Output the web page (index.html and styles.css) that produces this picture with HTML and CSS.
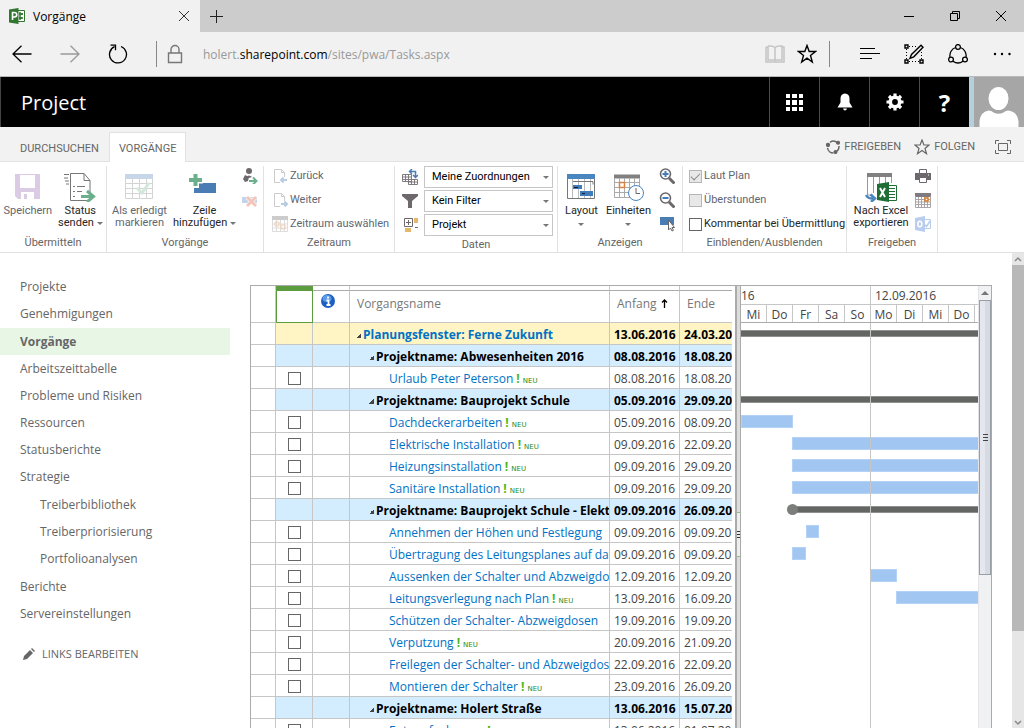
FILE: index.html
```html
<!DOCTYPE html>
<html lang="de">

<head>
    <meta charset="utf-8">
    <meta name="viewport" content="width=device-width, initial-scale=1.0">
    <title>Vorgänge</title>
    <link rel="stylesheet" href="styles.css">
</head>

<body>
    <div class="tab-strip">
        <div class="tab">
            <svg width="16" height="16" viewBox="0 0 16 16"><path fill="#fff" stroke="#31752f" d="M8 2.500h7.500v11H8z"/><path d="M11 4v8M10 6h4M10 10h4M13 5v2M12 9v2" stroke="#31752f" stroke-width="1.500"/><path fill="#31752f" d="M0 1.500 9.500 0v16L0 14.500z"/><path d="M3.500 12V4.500h2a2 2 0 0 1 0 4.500h-2" fill="none" stroke="#fff" stroke-width="1.600"/></svg>
            <span class="tab-title">Vorgänge</span>
            <button class="plain" aria-label="Tab schließen"><svg width="10" height="10"><path d="M0 0l10 10M10 0L0 10" stroke="#333"/></svg></button>
        </div>
        <button class="plain new-tab" aria-label="Neuer Tab"><svg width="13" height="13"><path d="M6.500 0v13M0 6.500h13" stroke="#222"/></svg></button>
        <div class="window-buttons">
            <button class="plain" aria-label="Minimieren"><svg width="10" height="10"><path d="M0 5.500h10" stroke="#000"/></svg></button>
            <button class="plain" aria-label="Wiederherstellen"><svg width="10" height="10"><path d="M.5 2.500h7v7h-7zM2.500 2.500v-2h7v7h-2" fill="none" stroke="#000"/></svg></button>
            <button class="plain" aria-label="Schließen"><svg width="10" height="10"><path d="M0 0l10 10M10 0L0 10" stroke="#000"/></svg></button>
        </div>
    </div>

    <div class="address-bar">
        <div class="nav-buttons">
            <button class="plain" aria-label="Zurück"><svg width="20" height="18" fill="none" stroke="#000" stroke-width="1.300"><path d="M19.500 9H1M9.500.8 1 9l8.500 8.200"/></svg></button>
            <button class="plain" aria-label="Vorwärts"><svg width="20" height="18" fill="none" stroke="#999" stroke-width="1.300"><path d="M.5 9H19M10.500.8 19 9l-8.500 8.200"/></svg></button>
            <button class="plain" aria-label="Aktualisieren"><svg width="20" height="20" fill="none" stroke="#000" stroke-width="1.300"><path d="M13 2.500A8.500 8.500 0 1 1 6.500 2.700M2.500 1.200h5v5"/></svg></button>
        </div>
        <div class="url">
            <svg width="16" height="20" fill="none" stroke="#777" stroke-width="1.400"><path d="M1.500 9h13v9.500h-13zM4 9V5.500a4 4 0 0 1 8 0V9"/></svg>
            <span>holert.<b>sharepoint.com</b>/sites/pwa/Tasks.aspx</span>
        </div>
        <div class="url-tools">
            <svg width="20" height="20" fill="none" stroke="#c4c4c4" stroke-width="1.500"><path d="M1 3h2v13h7V3.500Q8 1.500 3 2M10 3.500Q12 1.500 17 2v14h-7M17 3h2v15H1V3M10 16v2"/></svg>
            <svg width="20" height="20" fill="none" stroke="#000" stroke-width="1.400"><path d="M10 1.500l2.200 6h6.300l-5 4 1.800 6.500-5.300-3.800L4.700 18l1.800-6.500-5-4h6.300z"/></svg>
        </div>
        <div class="browser-tools">
            <svg width="20" height="20" stroke="#000"><path d="M0 4.500h15M0 9.500h20M0 14.500h12"/></svg>
            <svg width="20" height="20" fill="none" stroke="#000"><path stroke-width="1.400" d="M1 1h3v3H1zM1 16h3v3H1zM16 16h3v3h-3z"/><path stroke-dasharray="1 2" d="M5 2.500h7M2.500 5v10M5 17.500h10M17.500 8v7"/><path stroke-width="1.400" d="M17 1.200 7.500 10.500l-1.500 3.800 3.800-1.500L19 3.300z"/></svg>
            <svg width="20" height="20" fill="none" stroke="#000" stroke-width="1.300"><circle cx="10" cy="3" r="2.400"/><circle cx="3" cy="15.500" r="2.400"/><circle cx="17" cy="15.500" r="2.400"/><path d="M7.600 3.500A8.500 8.500 0 0 0 2 13M12.400 3.500A8.500 8.500 0 0 1 18 13M5 17.200a8.500 8.500 0 0 0 10 0"/></svg>
            <svg width="20" height="20"><circle cx="3" cy="10" r="1.200"/><circle cx="10" cy="10" r="1.200"/><circle cx="17.500" cy="10" r="1.200"/></svg>
        </div>
    </div>

    <header class="suite-bar">
        <h1>Project</h1>
        <button class="suite-button" aria-label="Apps"><svg width="17" height="17" fill="#fff"><path d="M0 0h4v4H0zM6 0h5v4H6zM13 0h4v4h-4zM0 6h4v5H0zM6 6h5v5H6zM13 6h4v5h-4zM0 13h4v4H0zM6 13h5v4H6zM13 13h4v4h-4z"/></svg></button>
        <button class="suite-button" aria-label="Benachrichtigungen"><svg width="16" height="18" fill="#fff"><path d="M8 .5c3 0 4.500 2.200 4.500 5v4l3 5H.5l3-5v-4c0-2.800 1.500-5 4.500-5zM6 15.500h4q-.5 2-2 2t-2-2z"/></svg></button>
        <button class="suite-button" aria-label="Einstellungen"><svg width="18" height="18" fill="none" stroke="#fff"><circle cx="9" cy="9" r="4.700" stroke-width="3.600"/><path stroke-width="3.200" d="M9 .5v3M9 14.500v3M.5 9h3M14.500 9h3M3 3l2 2M13 13l2 2M3 15l2-2M13 5l2-2"/></svg></button>
        <button class="suite-button help" aria-label="Hilfe">?</button>
        <div class="avatar"><svg width="50" height="50"><path fill="#a6a6a6" d="M0 0h50v50H0z"/><ellipse cx="24.500" cy="21.500" rx="10" ry="11.500" fill="#fff"/><path fill="#fff" d="M5.500 50V44q1-9 9-10.500 3 0 5 2 5 2.500 10 0 2-2 5-2 9 1.500 10 10.500v6z"/></svg></div>
    </header>

    <div class="ribbon-tabs">
        <a href="#" class="ribbon-tab">DURCHSUCHEN</a>
        <a href="#" class="ribbon-tab active">VORGÄNGE</a>
        <div class="page-actions">
            <a href="#"><svg width="14" height="14" fill="none" stroke="#666" stroke-width="1.500"><path d="M4 2.300A5.800 5.800 0 0 1 11.500 3M13 6a6 6 0 0 1-2.500 5.500M7.500 13A6 6 0 0 1 1.500 8"/><circle cx="2" cy="5" r="1.400" fill="#666"/><circle cx="12" cy="2.800" r="1.300" fill="#666"/><circle cx="9.500" cy="12" r="1.300" fill="#666"/></svg>FREIGEBEN</a>
            <a href="#"><svg width="16" height="16" fill="none" stroke="#666" stroke-width="1.200"><path d="M8 1l1.900 5h5.100l-4 3.500 1.500 5.200L8 11.600l-4.500 3.100L5 9.500 1 6h5.100z"/></svg>FOLGEN</a>
            <a href="#" aria-label="Vollbild"><svg width="16" height="14" fill="none" stroke="#666"><path d="M.5 4V.5H4M12 .5h3.500V4M15.500 10v3.500H12M4 13.500H.5V10M3.500 3.500h9v7h-9z"/></svg></a>
        </div>
    </div>

    <div class="ribbon">
        <section class="group group-submit">
            <div class="group-body">
                <button class="big disabled"><svg width="32" height="32"><path fill="#dccbe5" d="M3 4h25v25H6l-3-3z"/><path fill="#fff" d="M8 5h15v13H8zM9 22h13v7H9z"/><path fill="#dccbe5" d="M12 24h3v5h-3z"/></svg>Speichern</button>
                <button class="big"><svg width="32" height="32" fill="none" stroke="#777"><path d="M6.500 3.500H20l6 7v20H6.500zM20 3.500v7h6M9 16.500h2M13 16.500h8M9 21.500h2M13 21.500h5M9 26.500h2M0 4.500h5M0 8h4M1 11h4M2 14h3"/><path d="M17 26.500h12M23 21l6.500 5.500L23 32" stroke="#6caf8d" stroke-width="3"/></svg>Status<br>senden <i class="caret"></i></button>
            </div>
            <h2>Übermitteln</h2>
        </section>

        <section class="group group-tasks">
            <div class="group-body">
                <button class="big disabled"><svg width="32" height="32"><path fill="#c7d6e8" d="M2 4h28v5H2z"/><path fill="none" stroke="#d4d4d4" d="M2.500 9v19.500h27V9M2 13.500h28M2 18.500h28M2 23.500h28M9.500 9v19M16.500 9v19M23.500 9v19"/><path fill="none" stroke="#d2e8da" stroke-width="3" d="M14 18l5 5 7-10"/></svg>Als erledigt<br>markieren</button>
                <button class="big"><svg width="32" height="32"><path fill="#4b7db5" d="M6 13h22v10H6z"/><path d="M7.500 4v14M1 10h14" stroke="#fff" stroke-width="7"/><path d="M7.500 4v12M1 10h13" stroke="#6caf8d" stroke-width="4"/></svg>Zeile<br>hinzufügen <i class="caret"></i></button>
                <div class="icon-stack">
                    <button class="plain" aria-label="Neu zuweisen"><svg width="16" height="16"><circle cx="7" cy="3" r="3" fill="#6d686c"/><path fill="#6d686c" d="M4 9q3-3 6 0l-3 1zM3 7l4 2-1 4-3 1-2-3z"/><path d="M7 13h7M11 9.500l3.500 3.500-3.500 3.500" fill="none" stroke="#6caf8d" stroke-width="2"/></svg></button>
                    <button class="plain" aria-label="Löschen"><svg width="16" height="16"><path fill="#c3d4ea" d="M0 5h15v6H0z"/><path d="M5 5l9 9M14 5l-9 9" stroke="#fff" stroke-width="4"/><path d="M5 5l9 9M14 5l-9 9" stroke="#f3c4ba" stroke-width="3"/></svg></button>
                </div>
            </div>
            <h2>Vorgänge</h2>
        </section>

        <section class="group group-period">
            <div class="group-body rows">
                <button class="row disabled"><svg width="16" height="16" fill="none" stroke="#ccc"><path d="M8 14.500H2.500v-13h7l3 3V9M9.500 1.500v3h3"/><path d="M15 12H9M11.500 9.500 9 12l2.500 2.500" stroke="#b9cce2" stroke-width="2"/></svg>Zurück</button>
                <button class="row disabled"><svg width="16" height="16" fill="none" stroke="#ccc"><path d="M8 14.500H2.500v-13h7l3 3V9M9.500 1.500v3h3"/><path d="M9 12h6M12.500 9.500 15 12l-2.500 2.500" stroke="#b9cce2" stroke-width="2"/></svg>Weiter</button>
                <button class="row disabled"><svg width="16" height="16" fill="none" stroke="#ddd"><path d="M0 2h16" stroke="#ccc" stroke-width="4"/><path d="M.5 4v11.500h15V4M4.500 4v11M8.500 4v11M12.500 4v11M0 8h16M0 12h16"/><path d="M3 6h4v4H3zM9 9h4v4H9z" stroke="#f2cfae"/></svg>Zeitraum auswählen</button>
            </div>
            <h2>Zeitraum</h2>
        </section>

        <section class="group group-data">
            <div class="group-body rows">
                <label class="pick"><svg width="16" height="16" fill="none" stroke="#807b80"><path d="M.5 5.500h9v7h-9zM0 8h10M0 10.500h10M3.500 6v6M6.500 6v6M6.500 10.500h9v5h-9zM6 13h10M9.500 11v4M12.500 11v4"/><path stroke="#4b7db5" stroke-width="1.500" d="M10 0 7.500 2.500 10 5M8 2.500h5.500V8M11 6l2.500 2.500L16 6"/></svg>
                    <select aria-label="Ansicht"><option>Meine Zuordnungen</option></select></label>
                <label class="pick"><svg width="16" height="16"><path fill="#6d686c" d="M0 1h16v2l-6 5v7H6V8L0 3z"/></svg>
                    <select aria-label="Filter"><option>Kein Filter</option></select></label>
                <label class="pick"><svg width="16" height="16"><path d="M2.500 1.500h8v8h-8zM6.500 3v5M4 5.500h5M13 10.500h3" fill="none" stroke="#6d686c"/><path fill="#e5b768" d="M12 1h4v5h-4zM3 11h6v4H3z"/></svg>
                    <select aria-label="Gruppieren nach"><option>Projekt</option></select></label>
            </div>
            <h2>Daten</h2>
        </section>

        <section class="group group-show">
            <div class="group-body">
                <button class="big"><svg width="32" height="32"><path fill="#4a86bf" d="M2 4h28v5H2z"/><path fill="none" stroke="#bbb" d="M7.500 9v20M13.500 9v20M19.500 9v20M25.500 9v20"/><path fill="none" stroke="#777" d="M2.500 9v19.500h27V9M8 11.500h20v3"/><path fill="#3f7dba" d="M8 15h9v4H8zM15 21h13v5H15z"/><path d="M9 17.500h4M17 23.500h3" stroke="#201828"/></svg>Layout<i class="caret below"></i></button>
                <button class="big"><svg width="32" height="32" fill="none" stroke="#aaa"><path d="M2 6.500h26" stroke="#808080" stroke-width="4"/><path d="M2.500 8v19.500h25V8M2 12.500h25M2 17.500h25M2 22.500h25M7.500 8v19M12.500 8v19M17.500 8v19M22.500 8v19"/><path d="M7.500 12.500h5v5h-5z" stroke="#d98244" stroke-width="1.500"/><circle cx="24" cy="23" r="7.500" fill="#fff" stroke="#4a86bf"/><path d="M24 18v5.500h4" stroke="#666"/></svg>Einheiten<i class="caret below"></i></button>
                <div class="icon-stack">
                    <button class="plain" aria-label="Vergrößern"><svg width="16" height="16" fill="none"><path d="M10 10l5.500 5.500" stroke="#6d686c" stroke-width="3"/><circle cx="6.500" cy="6" r="5" stroke="#6d686c" stroke-width="1.600"/><path d="M3.500 6h6M6.500 3v6" stroke="#3f7dba" stroke-width="2"/></svg></button>
                    <button class="plain" aria-label="Verkleinern"><svg width="16" height="16" fill="none"><path d="M10 10l5.500 5.500" stroke="#6d686c" stroke-width="3"/><circle cx="6.500" cy="6" r="5" stroke="#6d686c" stroke-width="1.600"/><path d="M3.500 6h6" stroke="#3f7dba" stroke-width="2"/></svg></button>
                    <button class="plain" aria-label="Zum Vorgang"><svg width="16" height="16"><path fill="#4b7db5" d="M1 1h14v8H1z"/><path fill="#fff" stroke="#666" d="M9.500 4v10l2-2 1.500 3 1.500-.7L13 11.500h2.500z"/></svg></button>
                </div>
            </div>
            <h2>Anzeigen</h2>
        </section>

        <section class="group group-toggle">
            <div class="group-body rows">
                <label class="check disabled"><input type="checkbox" checked disabled>Laut Plan</label>
                <label class="check disabled"><input type="checkbox" disabled>Überstunden</label>
                <label class="check"><input type="checkbox">Kommentar bei Übermittlung</label>
            </div>
            <h2>Einblenden/Ausblenden</h2>
        </section>

        <section class="group group-export">
            <div class="group-body">
                <button class="big"><svg width="32" height="32"><path d="M2.500 5v20H8M8.500 5v18M14.500 5v10M20.500 5v10M26.500 5v8" fill="none" stroke="#999"/><path fill="#808080" d="M2 3h25v4H2z"/><path fill="#fff" stroke="#1f6e35" d="M22 15.500h9.500v15H22z"/><path d="M23 18.500h7M23 21.500h7M23 24.500h7M23 27.500h7" stroke="#1f6e35"/><path fill="#1f6e35" d="M12 14l12-2v20l-12-2z"/><path d="M15 18l5 9M20 18l-5 9" stroke="#fff" stroke-width="2"/><path d="M1 25q2 4 8 3.500M5.500 24.500 10 28.500l-4 3.500" fill="none" stroke="#4a86bf" stroke-width="2.500"/></svg>Nach Excel<br>exportieren</button>
                <div class="icon-stack">
                    <button class="plain" aria-label="Drucken"><svg width="16" height="16"><path fill="#6d686c" d="M0 5h16v7H0z"/><path fill="#fff" stroke="#6d686c" d="M4.500 1.500h7v4h-7zM4.500 9.500h7v5h-7z"/><path d="M13 7h1" stroke="#fff"/></svg></button>
                    <button class="plain" aria-label="Kalender"><svg width="16" height="16" fill="none" stroke="#807b80"><path d="M0 3h16" stroke-width="4"/><path d="M.5 4v11.500h15V4M3.500 5v10M6.500 5v10M9.500 5v10M12.500 5v10M0 7.500h16M0 10h16M0 12.500h16" stroke="#a9a5a9"/><path d="M10 6h3v3h-3z" fill="#fff" stroke="#e07c1f" stroke-width="1.500"/></svg></button>
                    <button class="plain" aria-label="Outlook"><svg width="16" height="16"><path d="M9 3.500h6.500v9H9z" fill="#fff" stroke="#b9cdee"/><path d="M9 8l2.500 2.500L15 5" fill="none" stroke="#b9cdee" stroke-width="1.500"/><path fill="#b9cdee" d="M0 2l10-2v16L0 14z"/><ellipse cx="4.800" cy="8" rx="2" ry="2.800" fill="none" stroke="#fff" stroke-width="1.500"/></svg></button>
                </div>
            </div>
            <h2>Freigeben</h2>
        </section>
    </div>

    <div class="workspace">
        <nav class="side-nav">
            <ul>
                <li><a href="#">Projekte</a></li>
                <li><a href="#">Genehmigungen</a></li>
                <li><a href="#" class="current">Vorgänge</a></li>
                <li><a href="#">Arbeitszeittabelle</a></li>
                <li><a href="#">Probleme und Risiken</a></li>
                <li><a href="#">Ressourcen</a></li>
                <li><a href="#">Statusberichte</a></li>
                <li><a href="#">Strategie</a>
                    <ul>
                        <li><a href="#">Treiberbibliothek</a></li>
                        <li><a href="#">Treiberpriorisierung</a></li>
                        <li><a href="#">Portfolioanalysen</a></li>
                    </ul>
                </li>
                <li><a href="#">Berichte</a></li>
                <li><a href="#">Servereinstellungen</a></li>
            </ul>
            <a href="#" class="edit-links"><svg width="12" height="12" fill="#666"><path d="M0 12l1-4 6-6 3 3-6 6zM8 1l1-1 3 3-1 1z"/></svg>LINKS BEARBEITEN</a>
        </nav>

        <main class="project-view">
            <div class="grid-pane">
                <table class="tasks">
                    <colgroup>
                        <col class="c-handle"><col class="c-check"><col class="c-info"><col class="c-name"><col class="c-date"><col class="c-date">
                    </colgroup>
                    <thead>
                        <tr class="strip"><td></td><td class="picked"></td><td></td><td></td><td></td><td></td></tr>
                        <tr>
                            <th></th>
                            <th class="picked"></th>
                            <th class="info"><svg width="14" height="14"><circle cx="7" cy="7" r="7" fill="#1c5fc0"/><ellipse cx="6" cy="4.500" rx="4.500" ry="3.500" fill="#5b9bea"/><path d="M7 2.500v2M5.500 6.500H7.500v4M5.500 11h4" stroke="#fff" stroke-width="1.800" fill="none"/></svg></th>
                            <th>Vorgangsname</th>
                            <th>Anfang<svg class="sort" width="7" height="9"><path d="M3.500 9V1M1 3.500 3.500 1 6 3.500" fill="none" stroke="#000" stroke-width="1.300"/></svg></th>
                            <th>Ende</th>
                        </tr>
                    </thead>
                    <tbody>
                        <tr class="window"><td></td><td></td><td></td><td class="name"><i class="fold"></i>Planungsfenster: Ferne Zukunft</td><td>13.06.2016</td><td>24.03.2017</td></tr>
                        <tr class="project"><td></td><td></td><td></td><td class="name"><i class="fold"></i>Projektname: Abwesenheiten 2016</td><td>08.08.2016</td><td>18.08.2016</td></tr>
                        <tr><td></td><td class="tick"><input type="checkbox" aria-label="Urlaub Peter Peterson"></td><td></td><td class="name"><a href="#">Urlaub Peter Peterson</a><b class="new">!<small>NEU</small></b></td><td>08.08.2016</td><td>18.08.2016</td></tr>
                        <tr class="project"><td></td><td></td><td></td><td class="name"><i class="fold"></i>Projektname: Bauprojekt Schule</td><td>05.09.2016</td><td>29.09.2016</td></tr>
                        <tr><td></td><td class="tick"><input type="checkbox" aria-label="Dachdeckerarbeiten"></td><td></td><td class="name"><a href="#">Dachdeckerarbeiten</a><b class="new">!<small>NEU</small></b></td><td>05.09.2016</td><td>08.09.2016</td></tr>
                        <tr><td></td><td class="tick"><input type="checkbox" aria-label="Elektrische Installation"></td><td></td><td class="name"><a href="#">Elektrische Installation</a><b class="new">!<small>NEU</small></b></td><td>09.09.2016</td><td>22.09.2016</td></tr>
                        <tr><td></td><td class="tick"><input type="checkbox" aria-label="Heizungsinstallation"></td><td></td><td class="name"><a href="#">Heizungsinstallation</a><b class="new">!<small>NEU</small></b></td><td>09.09.2016</td><td>29.09.2016</td></tr>
                        <tr><td></td><td class="tick"><input type="checkbox" aria-label="Sanitäre Installation"></td><td></td><td class="name"><a href="#">Sanitäre Installation</a><b class="new">!<small>NEU</small></b></td><td>09.09.2016</td><td>29.09.2016</td></tr>
                        <tr class="project"><td></td><td></td><td></td><td class="name"><i class="fold"></i>Projektname: Bauprojekt Schule - Elektro</td><td>09.09.2016</td><td>26.09.2016</td></tr>
                        <tr><td></td><td class="tick"><input type="checkbox" aria-label="Annehmen der Höhen"></td><td></td><td class="name"><a href="#">Annehmen der Höhen und Festlegung</a></td><td>09.09.2016</td><td>09.09.2016</td></tr>
                        <tr><td></td><td class="tick"><input type="checkbox" aria-label="Übertragung des Leitungsplanes"></td><td></td><td class="name"><a href="#">Übertragung des Leitungsplanes auf das</a></td><td>09.09.2016</td><td>09.09.2016</td></tr>
                        <tr><td></td><td class="tick"><input type="checkbox" aria-label="Aussenken der Schalter"></td><td></td><td class="name"><a href="#">Aussenken der Schalter und Abzweigdosen</a></td><td>12.09.2016</td><td>12.09.2016</td></tr>
                        <tr><td></td><td class="tick"><input type="checkbox" aria-label="Leitungsverlegung nach Plan"></td><td></td><td class="name"><a href="#">Leitungsverlegung nach Plan</a><b class="new">!<small>NEU</small></b></td><td>13.09.2016</td><td>16.09.2016</td></tr>
                        <tr><td></td><td class="tick"><input type="checkbox" aria-label="Schützen der Schalter"></td><td></td><td class="name"><a href="#">Schützen der Schalter- Abzweigdosen</a></td><td>19.09.2016</td><td>19.09.2016</td></tr>
                        <tr><td></td><td class="tick"><input type="checkbox" aria-label="Verputzung"></td><td></td><td class="name"><a href="#">Verputzung</a><b class="new">!<small>NEU</small></b></td><td>20.09.2016</td><td>21.09.2016</td></tr>
                        <tr><td></td><td class="tick"><input type="checkbox" aria-label="Freilegen der Schalter"></td><td></td><td class="name"><a href="#">Freilegen der Schalter- und Abzweigdosen</a></td><td>22.09.2016</td><td>22.09.2016</td></tr>
                        <tr><td></td><td class="tick"><input type="checkbox" aria-label="Montieren der Schalter"></td><td></td><td class="name"><a href="#">Montieren der Schalter</a><b class="new">!<small>NEU</small></b></td><td>23.09.2016</td><td>26.09.2016</td></tr>
                        <tr class="project"><td></td><td></td><td></td><td class="name"><i class="fold"></i>Projektname: Holert Straße</td><td>13.06.2016</td><td>15.07.2016</td></tr>
                        <tr><td></td><td class="tick"><input type="checkbox" aria-label="Entwurfsplanung"></td><td></td><td class="name"><a href="#">Entwurfsplanung</a><b class="new">!<small>NEU</small></b></td><td>13.06.2016</td><td>01.07.2016</td></tr>
                    </tbody>
                </table>
            </div>

            <div class="splitter"><div class="grip"></div></div>

            <div class="gantt">
                <div class="weeks"><span class="week">16</span><span class="week next">12.09.2016</span></div>
                <div class="days"><span>Mi</span><span>Do</span><span>Fr</span><span>Sa</span><span>So</span><span>Mo</span><span>Di</span><span>Mi</span><span>Do</span><span></span></div>
                <!-- one day is 26px wide, the first day shown is Wednesday 07.09. -->
                <div class="chart">
                    <div class="lanes">
                        <div class="lane"><span class="summary" style="width: 260px"></span></div>
                        <div class="lane"></div>
                        <div class="lane"></div>
                        <div class="lane"><span class="summary" style="width: 260px"></span></div>
                        <div class="lane"><span class="bar" style="width: 52px"></span></div>
                        <div class="lane"><span class="bar" style="margin-left: 51px; width: 260px"></span></div>
                        <div class="lane"><span class="bar" style="margin-left: 51px; width: 260px"></span></div>
                        <div class="lane"><span class="bar" style="margin-left: 51px; width: 260px"></span></div>
                        <div class="lane"><span class="summary starts" style="margin-left: 52px; width: 260px"></span></div>
                        <div class="lane"><span class="bar" style="margin-left: 65px; width: 13px"></span></div>
                        <div class="lane"><span class="bar" style="margin-left: 51px; width: 14px"></span></div>
                        <div class="lane"><span class="bar" style="margin-left: 129px; width: 27px"></span></div>
                        <div class="lane"><span class="bar" style="margin-left: 155px; width: 104px"></span></div>
                    </div>
                </div>
            </div>

            <div class="view-scroll">
                <i class="arrow-up"></i>
                <div class="thumb"><div class="thumb-grip"></div></div>
            </div>
        </main>

        <div class="page-scroll">
            <svg width="12" height="12" fill="none" stroke="#888" stroke-width="1.500"><path d="M3 8l3-3 3 3"/></svg>
            <div class="page-thumb"></div>
            <svg width="12" height="12" fill="none" stroke="#888" stroke-width="1.500"><path d="M3 5l3 3 3-3"/></svg>
        </div>
    </div>
</body>

</html>
```
FILE: styles.css
```css
* {
    box-sizing: border-box;
}

body {
    margin: 0;
    height: 100vh;
    display: flex;
    flex-direction: column;
    overflow: hidden;
    background: #fff;
    font-family: "Open Sans", "Noto Sans", sans-serif;
    font-size: 12px;
    color: #444;
}

a {
    color: inherit;
    text-decoration: none;
}

svg {
    display: block;
    flex: none;
}

button {
    font: inherit;
    color: inherit;
    padding: 0;
    border: 0;
    background: none;
    cursor: pointer;
}

/* browser */

.tab-strip {
    display: flex;
    align-items: center;
    flex: none;
    height: 32px;
    background: #ccc;
    color: #000;
}

.tab {
    display: flex;
    align-items: center;
    gap: 8px;
    width: 200px;
    height: 32px;
    padding: 0 11px 0 9px;
    background: #f1f1f1;
}

.tab-title {
    flex: 1;
}

.new-tab {
    margin-left: 10px;
}

.window-buttons {
    display: flex;
    gap: 36px;
    margin-left: auto;
    padding-right: 18px;
}

.address-bar {
    display: flex;
    align-items: center;
    flex: none;
    height: 45px;
    background: #f1f1f1;
    border-bottom: 1px solid #b5b9b9;
}

.nav-buttons {
    display: flex;
    align-items: center;
    gap: 28px;
    padding: 0 28px 0 12px;
}

.url {
    display: flex;
    align-items: center;
    gap: 20px;
    flex: 1;
    height: 26px;
    padding-left: 10px;
    border-left: 1px solid #888;
    color: #999;
}

.url b {
    font-weight: normal;
    color: #000;
}

.url-tools {
    display: flex;
    align-items: center;
    gap: 12px;
    height: 26px;
    padding-right: 12px;
    border-right: 1px solid #888;
}

.browser-tools {
    display: flex;
    gap: 24px;
    padding: 0 12px 0 30px;
}

/* suite bar */

.suite-bar {
    display: flex;
    flex: none;
    height: 50px;
    background: #000;
    border-left: 1px solid #444;
    color: #fff;
}

.suite-bar h1 {
    flex: 1;
    margin: 0;
    padding-left: 20px;
    font-size: 20px;
    font-weight: normal;
    line-height: 52px;
}

.suite-button {
    display: flex;
    align-items: center;
    justify-content: center;
    width: 50px;
    border-left: 1px solid #4c4c4c;
}

.help {
    font-size: 24px;
    font-weight: bold;
}

.avatar {
    border-left: 5px solid #b5d0dc;
}

/* ribbon */

.ribbon-tabs {
    display: flex;
    flex: none;
    height: 35px;
    padding-top: 5px;
    background: #f2f2f2;
    border-bottom: 1px solid #e1e1e1;
    font-family: Roboto, sans-serif;
    font-size: 11px;
    line-height: 34px;
    color: #666;
}

.ribbon-tab {
    padding: 0 10px 0 20px;
}

.ribbon-tab.active {
    height: 30px;
    padding: 0 9px;
    background: #fff;
    border: 1px solid #e1e1e1;
    border-bottom: 0;
    line-height: 32px;
}

.page-actions {
    display: flex;
    align-items: center;
    gap: 13px;
    margin-left: auto;
    padding-right: 13px;
}

.page-actions a {
    display: flex;
    align-items: center;
    gap: 4px;
}

.page-actions a:last-child {
    margin-left: 7px;
}

.ribbon {
    display: flex;
    flex: none;
    height: 91px;
    padding-top: 4px;
    border-bottom: 1px solid #e1e1e1;
    font-family: Roboto, sans-serif;
    font-size: 11px;
    line-height: 12px;
    color: #262626;
}

.group {
    display: flex;
    flex-direction: column;
    flex: none;
    border-right: 1px solid #e1e1e1;
}

.group h2 {
    margin: 0;
    font-size: 11px;
    font-weight: normal;
    line-height: 18px;
    text-align: center;
    color: #666;
}

.group-submit { width: 107px; }
.group-tasks { width: 157px; }
.group-period { width: 131px; }
.group-data { width: 163px; }
.group-show { width: 125px; }
.group-toggle { width: 164px; }
.group-export { width: 91px; }

.group-body {
    display: flex;
    justify-content: center;
    gap: 6px;
    height: 70px;
}

.group-body.rows {
    flex-direction: column;
    justify-content: flex-start;
    gap: 4px;
}

.big {
    align-self: flex-start;
    padding-top: 4px;
    line-height: 12px;
    white-space: nowrap;
}

.big svg {
    margin: 0 auto 3px;
}

.disabled {
    color: #5f6772;
}

.caret {
    display: inline-block;
    border: 3px solid transparent;
    border-top-color: #777;
    border-bottom: 0;
    vertical-align: 1px;
}

.caret.below {
    display: block;
    width: 6px;
    margin: 6px auto 0;
}

.group-show .group-body {
    gap: 8px;
}

.icon-stack {
    display: flex;
    flex-direction: column;
    gap: 8px;
    padding-top: 2px;
}

.row {
    display: flex;
    align-items: center;
    gap: 2px;
    height: 20px;
    padding-left: 8px;
    text-align: left;
    white-space: nowrap;
}

.group-data .rows {
    gap: 2px;
}

.pick {
    display: flex;
    align-items: center;
    gap: 6px;
    padding: 0 4px 0 7px;
}

.pick select {
    appearance: none;
    flex: 1;
    height: 22px;
    padding: 0 7px;
    border: 1px solid #c6c6c6;
    border-radius: 0;
    background: #fff;
    font: inherit;
    color: #000;
}

.pick::after {
    content: "";
    margin: 0 4px 0 -16px;
    border: 3px solid transparent;
    border-top-color: #777;
    border-bottom: 0;
    pointer-events: none;
}

input[type="checkbox"] {
    appearance: none;
    flex: none;
    width: 13px;
    height: 13px;
    margin: 0;
    border: 1px solid #666;
    background: #fff;
}

.check {
    display: flex;
    align-items: center;
    gap: 2px;
    height: 20px;
    padding-left: 6px;
    white-space: nowrap;
}

.check input:disabled {
    border-color: #b5b5b5;
    background: #e8e8e8;
}

.check input:checked::after {
    content: "";
    display: block;
    width: 8px;
    height: 4px;
    margin: 2px 1px;
    border: solid #888;
    border-width: 0 0 1px 1px;
    transform: rotate(-45deg);
}

/* page */

.workspace {
    display: flex;
    flex: 1;
    min-height: 0;
}

.side-nav {
    flex: none;
    width: 230px;
    padding-top: 20px;
    color: #666;
}

.side-nav ul {
    margin: 0;
    padding: 0;
    list-style: none;
}

.side-nav li ul {
    padding: 1px 0;
}

.side-nav li a {
    display: block;
    padding-left: 20px;
    line-height: 27px;
}

.side-nav li li a {
    padding-left: 40px;
}

.side-nav .current {
    margin-top: 1px;
    background: #e8f6e5;
    font-weight: bold;
}

.edit-links {
    display: flex;
    align-items: center;
    gap: 7px;
    padding: 19px 0 0 23px;
    font-size: 11px;
}

.project-view {
    display: flex;
    flex: 1;
    min-width: 0;
    margin: 32px 20px 0;
    border: 1px solid #ababab;
    border-bottom: 0;
    overflow: hidden;
}

.grid-pane {
    flex: 1;
    min-width: 0;
    margin-right: 3px;
    overflow: hidden;
}

.tasks {
    width: 499px;
    table-layout: fixed;
    border-collapse: separate;
    border-spacing: 0;
}

.c-handle { width: 25px; }
.c-check, .c-info { width: 37px; }
.c-name { width: 260px; }
.c-date { width: 70px; }

.tasks td,
.tasks th {
    height: 22px;
    padding: 2px 0 0 4px;
    border: solid #c6c6c6;
    border-width: 0 1px 1px 0;
    line-height: 19px;
    white-space: nowrap;
    overflow: hidden;
}

.tasks .strip td {
    height: 5px;
    line-height: 1px;
    border-bottom-color: #ababab;
}

.tasks .strip td:first-child {
    border-bottom-color: transparent;
}

.tasks th {
    height: 32px;
    padding: 0 7px 7px;
    font-weight: normal;
    text-align: left;
    color: #777;
}

.tasks .strip .picked {
    background: #5b9c3f;
    border-color: #5b9c3f;
}

.tasks th.picked {
    border-color: #5b9c3f;
    border-left: 1px solid #5b9c3f;
}

.tasks th.info {
    padding: 0 7px 11px 8px;
}

.sort {
    display: inline-block;
    margin-left: 4px;
}

.tasks .name {
    padding-left: 39px;
}

.tasks .name a {
    color: #0072c6;
}

.tasks .tick {
    padding-left: 12px;
}

.tick input {
    display: block;
}

.project td,
.window td {
    font-weight: bold;
    color: #000;
}

.project td + td {
    background: #d3edff;
}

.window td + td {
    background: #fff4c3;
}

.tasks .project .name {
    padding-left: 19px;
}

.tasks .window .name {
    padding-left: 6px;
    color: #0072c6;
}

.fold {
    display: inline-block;
    width: 5px;
    height: 5px;
    margin-right: 2px;
    background: linear-gradient(135deg, transparent 50%, #444 50%);
    vertical-align: 1px;
}

.new {
    padding-left: 3px;
    line-height: 1;
    color: #4ab81c;
}

.new small {
    padding-left: 3px;
    font-family: "DejaVu Sans", sans-serif;
    font-size: 7px;
    font-weight: normal;
    line-height: 1;
    color: #1f8a14;
}

.splitter {
    display: flex;
    align-items: center;
    flex: none;
    width: 6px;
    border: solid #ababab;
    border-width: 0 1px 0 2px;
    background: #dcdcdc;
}

.grip {
    flex: none;
    width: 3px;
    height: 45px;
    margin-top: 55px;
    border: solid #8cc47c;
    border-width: 1px 0;
    background: repeating-linear-gradient(#333 0 1px, transparent 1px 3px) center / 3px 7px no-repeat, #eee;
}

.gantt {
    display: flex;
    flex-direction: column;
    flex: none;
    width: 237px;
    overflow: hidden;
}

.weeks,
.days {
    display: flex;
    flex: none;
    line-height: 19px;
}

.weeks {
    height: 19px;
    line-height: 20px;
    border-bottom: 1px solid #c6c6c6;
}

.week {
    flex: none;
    width: 130px;
    border-right: 1px solid #c6c6c6;
}

.week.next {
    padding-left: 4px;
}

.days {
    height: 18px;
    border-bottom: 1px solid #ababab;
}

.days span {
    flex: none;
    width: 26px;
    border-right: 1px solid #c6c6c6;
    text-align: center;
}

/* the week line runs over the bars */
.chart {
    display: grid;
    grid-template-columns: 129px 1px 1fr;
    flex: 1;
}

.chart::after {
    content: "";
    grid-area: 1 / 2;
    background: #c6c6c6;
}

.lanes {
    grid-area: 1 / 1 / 2 / 4;
    min-width: 0;
}

.lane {
    display: flex;
    height: 22px;
    padding-top: 4px;
}

.bar {
    flex: none;
    height: 13px;
    border: 1px solid #b3d2f5;
    background: #a0c6f1;
}

.summary {
    flex: none;
    height: 7px;
    margin-top: 3px;
    border: solid #8f918f;
    border-width: 1px 0;
    background: #636662;
}

.starts::before {
    content: "";
    display: block;
    width: 11px;
    height: 11px;
    margin: -3px 0 0 -6px;
    border-radius: 50%;
    background: #7c7e7c;
}

.view-scroll {
    display: flex;
    flex-direction: column;
    flex: none;
    width: 13px;
    background: #f0f1f3;
    border-left: 1px solid #e3e3e8;
}

.arrow-up {
    align-self: center;
    margin: 5px 0;
    border: 4px solid transparent;
    border-top: 0;
    border-bottom-color: #777;
}

.thumb {
    display: flex;
    align-items: center;
    justify-content: center;
    height: 275px;
    border: 1px solid #999da5;
    background: linear-gradient(90deg, #e4e7ed 50%, #d5dae3 50%);
}

.thumb-grip {
    width: 5px;
    height: 7px;
    background: repeating-linear-gradient(#444 0 1px, transparent 1px 3px);
}

.page-scroll {
    display: flex;
    flex-direction: column;
    flex: none;
    width: 12px;
    background: #e6e6e6;
}

.page-thumb {
    flex: 0 0 77%;
    background: #b8b8b8;
}

.page-scroll svg:last-child {
    margin-top: auto;
}
```
